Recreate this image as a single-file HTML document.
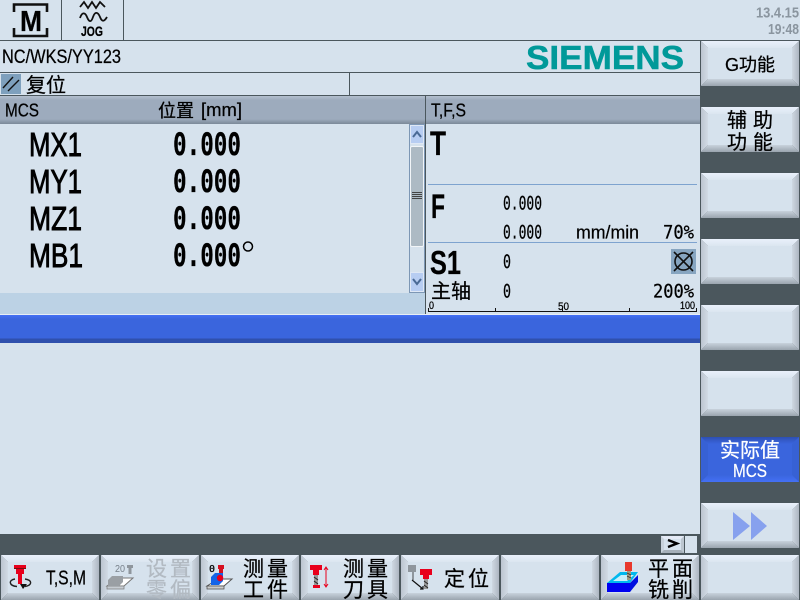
<!DOCTYPE html>
<html><head><meta charset="utf-8"><style>
html,body{margin:0;padding:0;width:800px;height:600px;overflow:hidden;background:#d6e2ed}
#r{position:absolute;left:0;top:0;width:800px;height:600px;overflow:hidden;background:#d6e2ed}
.a{position:absolute}
svg{position:absolute;left:0;top:0}
text{font-family:"Liberation Sans","Noto Sans CJK SC",sans-serif;fill:#000;stroke:#000;stroke-width:.25}
.m{font-family:"DejaVu Sans Mono","Liberation Mono",monospace}
.w{fill:#fff;stroke:#fff}
.g{fill:#b2bac2;stroke:#b2bac2}
.t{fill:#8a959f;stroke:none}
</style></head><body><div id="r">
<div class="a" style="left:0;top:40px;width:700px;height:1px;background:#4b575d"></div>
<div class="a" style="left:61px;top:0;width:1px;height:40px;background:#4b575d"></div>
<div class="a" style="left:123px;top:0;width:1px;height:40px;background:#4b575d"></div>
<div class="a" style="left:0;top:72px;width:700px;height:1px;background:#4b575d"></div>
<div class="a" style="left:349px;top:73px;width:1px;height:22px;background:#4b575d"></div>
<div class="a" style="left:0;top:95px;width:700px;height:1px;background:#4b575d"></div>
<div class="a" style="left:0;top:96px;width:700px;height:28px;background:linear-gradient(#b4c0ce 0,#9dabbd 4px,#9dabbd 23px,#7b8998 28px)"></div>
<div class="a" style="left:0;top:293px;width:425px;height:21px;background:#bcd2e5"></div>
<div class="a" style="left:425px;top:96px;width:1px;height:219px;background:#4b575d"></div>
<div class="a" style="left:0;top:314px;width:700px;height:1px;background:#e8eef4"></div>
<div class="a" style="left:0;top:315px;width:700px;height:28px;background:linear-gradient(#4470f5 0,#3a65dd 4px,#3a65dd 23px,#2f50ad 24px,#2f50ad 28px)"></div>
<div class="a" style="left:700px;top:40px;width:100px;height:560px;background:#4b575d"></div>
<div class="a" style="left:0;top:534px;width:800px;height:66px;background:#4b575d"></div>

<div class="a" style="left:661px;top:536px;width:23px;height:17px;box-sizing:border-box;background:#d6e2ed;border-style:solid;border-width:3px;border-color:#e4eaf6 #bcc6d0 #a6b0ba #c8d2dc"></div>
<div class="a" style="left:685px;top:536px;width:12px;height:17px;background:#d6e2ed"></div>

<!-- scrollbar -->
<div class="a" style="left:409px;top:124px;width:16px;height:169px;box-sizing:border-box;background:#d6e2ed;border:1px solid #7d97b5"></div>
<div class="a" style="left:410px;top:125px;width:14px;height:19px;box-sizing:border-box;background:#b7cdf2;border:1px solid #dfe8f5"></div>
<div class="a" style="left:410px;top:146px;width:14px;height:101px;box-sizing:border-box;background:#adbac4;border:1px solid #f2f5f8;border-radius:2px"></div>
<div class="a" style="left:410px;top:272px;width:14px;height:20px;box-sizing:border-box;background:#b7cdf2;border:1px solid #dfe8f5"></div>

<svg width="800" height="600" viewBox="0 0 800 600">
<defs>
<linearGradient id="gt" x1="0" y1="0" x2="0" y2="1"><stop offset="0" stop-color="#e9f0fb"/><stop offset="1" stop-color="#dbe6f0"/></linearGradient>
<linearGradient id="gb" x1="0" y1="1" x2="0" y2="0"><stop offset="0" stop-color="#9aa4ae"/><stop offset="1" stop-color="#c8d2dc"/></linearGradient>
<linearGradient id="gl" x1="0" y1="0" x2="1" y2="0"><stop offset="0" stop-color="#bcc5d0"/><stop offset="1" stop-color="#d2dbe5"/></linearGradient>
<linearGradient id="gr" x1="1" y1="0" x2="0" y2="0"><stop offset="0" stop-color="#adb6c1"/><stop offset="1" stop-color="#cfd8e2"/></linearGradient>
<linearGradient id="bt" x1="0" y1="0" x2="0" y2="1"><stop offset="0" stop-color="#2d4fb2"/><stop offset="1" stop-color="#3a65dd"/></linearGradient>
<linearGradient id="bb" x1="0" y1="1" x2="0" y2="0"><stop offset="0" stop-color="#4470f5"/><stop offset="1" stop-color="#3a65dd"/></linearGradient>
<g id="btn">
<rect x="7" y="7" width="84" height="31" fill="#d6e2ed"/>
<polygon points="0,0 7,7 7,38 0,45" fill="url(#gl)"/>
<polygon points="98,0 91,7 91,38 98,45" fill="url(#gr)"/>
<polygon points="0,0 98,0 91,7 7,7" fill="url(#gt)"/>
<polygon points="0,45 98,45 91,38 7,38" fill="url(#gb)"/>
</g>
</defs>
<use href="#btn" x="701" y="41"/>
<use href="#btn" x="701" y="107"/>
<use href="#btn" x="701" y="173"/>
<use href="#btn" x="701" y="239"/>
<use href="#btn" x="701" y="305"/>
<use href="#btn" x="701" y="371"/>
<use href="#btn" x="701" y="503"/>
<use href="#btn" x="1" y="555"/>
<use href="#btn" x="101" y="555"/>
<use href="#btn" x="201" y="555"/>
<use href="#btn" x="301" y="555"/>
<use href="#btn" x="401" y="555"/>
<use href="#btn" x="501" y="555"/>
<use href="#btn" x="601" y="555"/>
<use href="#btn" x="701" y="555"/>
<!-- active button -->
<rect x="701" y="437" width="98" height="45" fill="#3a65dd"/>
<polygon points="701,437 708,444 708,475 701,482" fill="#3761d4"/>
<polygon points="799,437 792,444 792,475 799,482" fill="#3761d4"/>
<polygon points="701,437 799,437 792,444 708,444" fill="url(#bt)"/>
<polygon points="701,482 799,482 792,475 708,475" fill="url(#bb)"/>

<!-- M icon -->
<path d="M14 12V4.500H47V12M14 28V36H47V28" fill="none" stroke="#111" stroke-width="2.600"/>
<text x="20" y="31" font-size="29" font-weight="bold" textLength="22" lengthAdjust="spacingAndGlyphs">M</text>
<!-- JOG icon -->
<path d="M80 7L84 2 88 8 92 2 96 8 100 2 105 7" fill="none" stroke="#111" stroke-width="1.800"/>
<path d="M80 18C82 12 85 12 87 17S91 23 93 17 98 12 100 17 104 22 107 17" fill="none" stroke="#111" stroke-width="1.800"/>
<text x="81" y="36" font-size="14" font-weight="bold" textLength="22" lengthAdjust="spacingAndGlyphs">JOG</text>

<text class="t" x="756" y="17.500" font-size="15" font-weight="bold" textLength="43" lengthAdjust="spacingAndGlyphs">13.4.15</text>
<text class="t" x="768" y="34" font-size="15" font-weight="bold" textLength="31" lengthAdjust="spacingAndGlyphs">19:48</text>

<text x="526" y="69" font-size="33" font-weight="bold" style="fill:#009999;stroke:#009999;stroke-width:.5" textLength="158" lengthAdjust="spacingAndGlyphs">SIEMENS</text>
<text x="2" y="63" font-size="19" textLength="119" lengthAdjust="spacingAndGlyphs">NC/WKS/YY123</text>

<rect x="1" y="74" width="20" height="20" fill="#7ea0bd"/>
<path d="M3 88L13 77M8 91L19 80" stroke="#111" stroke-width="1.400"/>
<text x="26" y="92" font-size="20">复位</text>

<text x="5" y="116.500" font-size="18" textLength="34" lengthAdjust="spacingAndGlyphs">MCS</text>
<text x="158" y="117" font-size="18">位置</text>
<text x="201" y="116" font-size="18" textLength="41" lengthAdjust="spacingAndGlyphs">[mm]</text>
<text x="431" y="116.500" font-size="18" textLength="35" lengthAdjust="spacingAndGlyphs">T,F,S</text>

<g font-size="33" style="stroke-width:.9">
<text x="29" y="156" style="stroke-width:.9" textLength="53" lengthAdjust="spacingAndGlyphs">MX1</text>
<text x="29" y="193" style="stroke-width:.9" textLength="53" lengthAdjust="spacingAndGlyphs">MY1</text>
<text x="29" y="230" style="stroke-width:.9" textLength="53" lengthAdjust="spacingAndGlyphs">MZ1</text>
<text x="29" y="267" style="stroke-width:.9" textLength="54" lengthAdjust="spacingAndGlyphs">MB1</text>
</g>
<g font-size="31.500" font-weight="bold">
<text class="m" x="173" y="155" textLength="68" lengthAdjust="spacingAndGlyphs">0.000</text>
<text class="m" x="173" y="192" textLength="68" lengthAdjust="spacingAndGlyphs">0.000</text>
<text class="m" x="173" y="229" textLength="68" lengthAdjust="spacingAndGlyphs">0.000</text>
<text class="m" x="173" y="266" textLength="68" lengthAdjust="spacingAndGlyphs">0.000</text>
</g>
<circle cx="248" cy="246.500" r="4.500" fill="none" stroke="#000" stroke-width="1.500"/>

<!-- scroll arrows -->
<path d="M413 137L417 132 421 137" fill="none" stroke="#4a6a95" stroke-width="2"/>
<path d="M413 279L417 284 421 279" fill="none" stroke="#4a6a95" stroke-width="2"/>
<path d="M412 192.500H422M412 194.500H422M412 196.500H422M412 198.500H422" stroke="#444" stroke-width="1"/>

<!-- TFS panel -->
<text x="430" y="155" font-size="34" font-weight="bold" textLength="16" lengthAdjust="spacingAndGlyphs">T</text>
<path d="M428 184.500H697M428 242.500H697" stroke="#7ea3cf" stroke-width="1"/>
<text x="431" y="218" font-size="34" font-weight="bold" textLength="14" lengthAdjust="spacingAndGlyphs">F</text>
<text x="430" y="274" font-size="33" font-weight="bold" textLength="31" lengthAdjust="spacingAndGlyphs">S1</text>
<g font-size="19">
<text class="m" x="503" y="209.500" textLength="39" lengthAdjust="spacingAndGlyphs">0.000</text>
<text class="m" x="503" y="238.500" textLength="39" lengthAdjust="spacingAndGlyphs">0.000</text>
<text x="576" y="238.500" font-size="18" textLength="63" lengthAdjust="spacingAndGlyphs">mm/min</text>
<text class="m" x="663" y="238.500" textLength="31" lengthAdjust="spacingAndGlyphs">70%</text>
<text class="m" x="503" y="268" textLength="8" lengthAdjust="spacingAndGlyphs">0</text>
<text class="m" x="503" y="297.500" textLength="8" lengthAdjust="spacingAndGlyphs">0</text>
<text class="m" x="653" y="297.500" textLength="41" lengthAdjust="spacingAndGlyphs">200%</text>
</g>
<rect x="671" y="249" width="25" height="25" fill="#87a5c0"/>
<circle cx="683.500" cy="261.500" r="8.500" fill="none" stroke="#111" stroke-width="1.600"/>
<path d="M674 252L693 271M693 252L674 271" stroke="#111" stroke-width="1.600"/>
<text x="431" y="298" font-size="20">主轴</text>
<path d="M428.500 308V311.500H696.500V308M495.500 308V311M562.500 308V311M629.500 308V311" fill="none" stroke="#111" stroke-width="1"/>
<g font-size="11">
<text x="429" y="309" textLength="5" lengthAdjust="spacingAndGlyphs">0</text>
<text x="558" y="310" textLength="11" lengthAdjust="spacingAndGlyphs">50</text>
<text x="680" y="309" textLength="15" lengthAdjust="spacingAndGlyphs">100</text>
</g>

<!-- right softkey text -->
<text x="725" y="71" font-size="18" textLength="50">G功能</text>
<text x="727" y="127" font-size="20" textLength="46">辅助</text>
<text x="727" y="149" font-size="20" textLength="46">功能</text>
<text class="w" x="720" y="457" font-size="20">实际值</text>
<text class="w" x="733" y="477" font-size="18" textLength="34" lengthAdjust="spacingAndGlyphs">MCS</text>
<path d="M733 512L750 526 733 540ZM751 512L767 526 751 540Z" fill="#87a1ee"/>
<path d="M668 540L677 543.500 668 547" fill="none" stroke="#000" stroke-width="2.400"/>

<!-- bottom softkey text -->
<text x="46" y="584.500" font-size="20" textLength="40" lengthAdjust="spacingAndGlyphs">T,S,M</text>
<g font-size="21">
<text class="g" x="146" y="576" textLength="45">设置</text>
<text class="g" x="146" y="597" textLength="45">零偏</text>
<text x="243" y="576" textLength="45">测量</text>
<text x="243" y="597" textLength="45">工件</text>
<text x="343" y="576" textLength="45">测量</text>
<text x="343" y="597" textLength="45">刀具</text>
<text x="444" y="586" textLength="45">定位</text>
<text x="648" y="576" textLength="45">平面</text>
<text x="648" y="597" textLength="45">铣削</text>
</g>

<!-- icon: T,S,M -->
<path d="M14 565H26V569H24V574H16V569H14Z" fill="#e8001c"/>
<rect x="14" y="568" width="12" height="1" fill="#7a1010"/>
<rect x="18" y="574" width="4" height="10" fill="#e8001c"/>
<path d="M15 579C8 580 9 586 17 586.500M25 579C32 580 33 585 25 586.500" fill="none" stroke="#222" stroke-width="1.400"/>
<path d="M20 584H27L23 589Z" fill="#111"/>

<!-- icon: zero offset (disabled) -->
<text class="t" x="115" y="572" font-size="10" style="fill:#77808a" textLength="10" lengthAdjust="spacingAndGlyphs">20</text>
<path d="M127 565H133V568H131.500V574H128.500V568H127Z" fill="#8f969d"/>
<path d="M107 586L118 578H133L124 586Z" fill="#fff" stroke="#777" stroke-width="1"/>
<rect x="107" y="586" width="17" height="3" fill="#c6ccd2" stroke="#777" stroke-width=".7"/>
<path d="M108 580L112 576H123V582L119 586H108Z" fill="#9a9fa4"/>

<!-- icon: measure workpiece -->
<text x="209" y="572" class="m" font-size="10">0</text>
<path d="M218 565H224V569H223V575H219V569H218Z" fill="#d61020"/>
<path d="M207 586L218 579H232L224 586Z" fill="#fff" stroke="#555" stroke-width="1"/>
<rect x="207" y="586" width="17" height="3" fill="#ccc" stroke="#444" stroke-width=".7"/>
<path d="M211 577L215 573H223V581L219 585H211Z" fill="#1464e8"/>
<circle cx="220" cy="578" r="3.200" fill="#e8001c"/>

<!-- icon: measure tool -->
<path d="M310 565H322V570H319V575H313V570H310Z" fill="#e8001c"/>
<rect x="314" y="575" width="4" height="10" fill="#999"/>
<path d="M314 577L318 580M314 581L318 584" stroke="#222" stroke-width="1"/>
<rect x="313" y="585" width="7" height="3" fill="#e8001c"/>
<path d="M326 568V586M324 570L326 567 328 570M324 584L326 587 328 584" fill="none" stroke="#e8001c" stroke-width="1"/>

<!-- icon: position -->
<path d="M408 565H416V572H414V580H412V572H408Z" fill="#8f969d"/>
<path d="M412 580L423 589M420 589H423V586" fill="none" stroke="#111" stroke-width="1.200"/>
<path d="M420 569H432V575H429V579H423V575H420Z" fill="#e8001c"/>
<rect x="424" y="579" width="4" height="10" fill="#999"/>
<path d="M424 581L428 584M424 585L428 588" stroke="#222" stroke-width="1"/>

<!-- icon: face milling -->
<path d="M607 583H630V592H607Z" fill="#0000f0"/>
<path d="M630 583L638 575V582L630 592Z" fill="#0010e0"/>
<path d="M607 583L620 572H638L630 583Z" fill="#00b8ee"/>
<path d="M613 581L621 575H634L627 581Z" fill="#c7eefa"/>
<rect x="625" y="562" width="7" height="9" fill="#e8382c"/>
<rect x="627" y="571" width="4" height="9" fill="#a09a80"/>
<path d="M627 573L631 575M627 576L631 578" stroke="#333" stroke-width=".8"/>
</svg>
</div></body></html>
